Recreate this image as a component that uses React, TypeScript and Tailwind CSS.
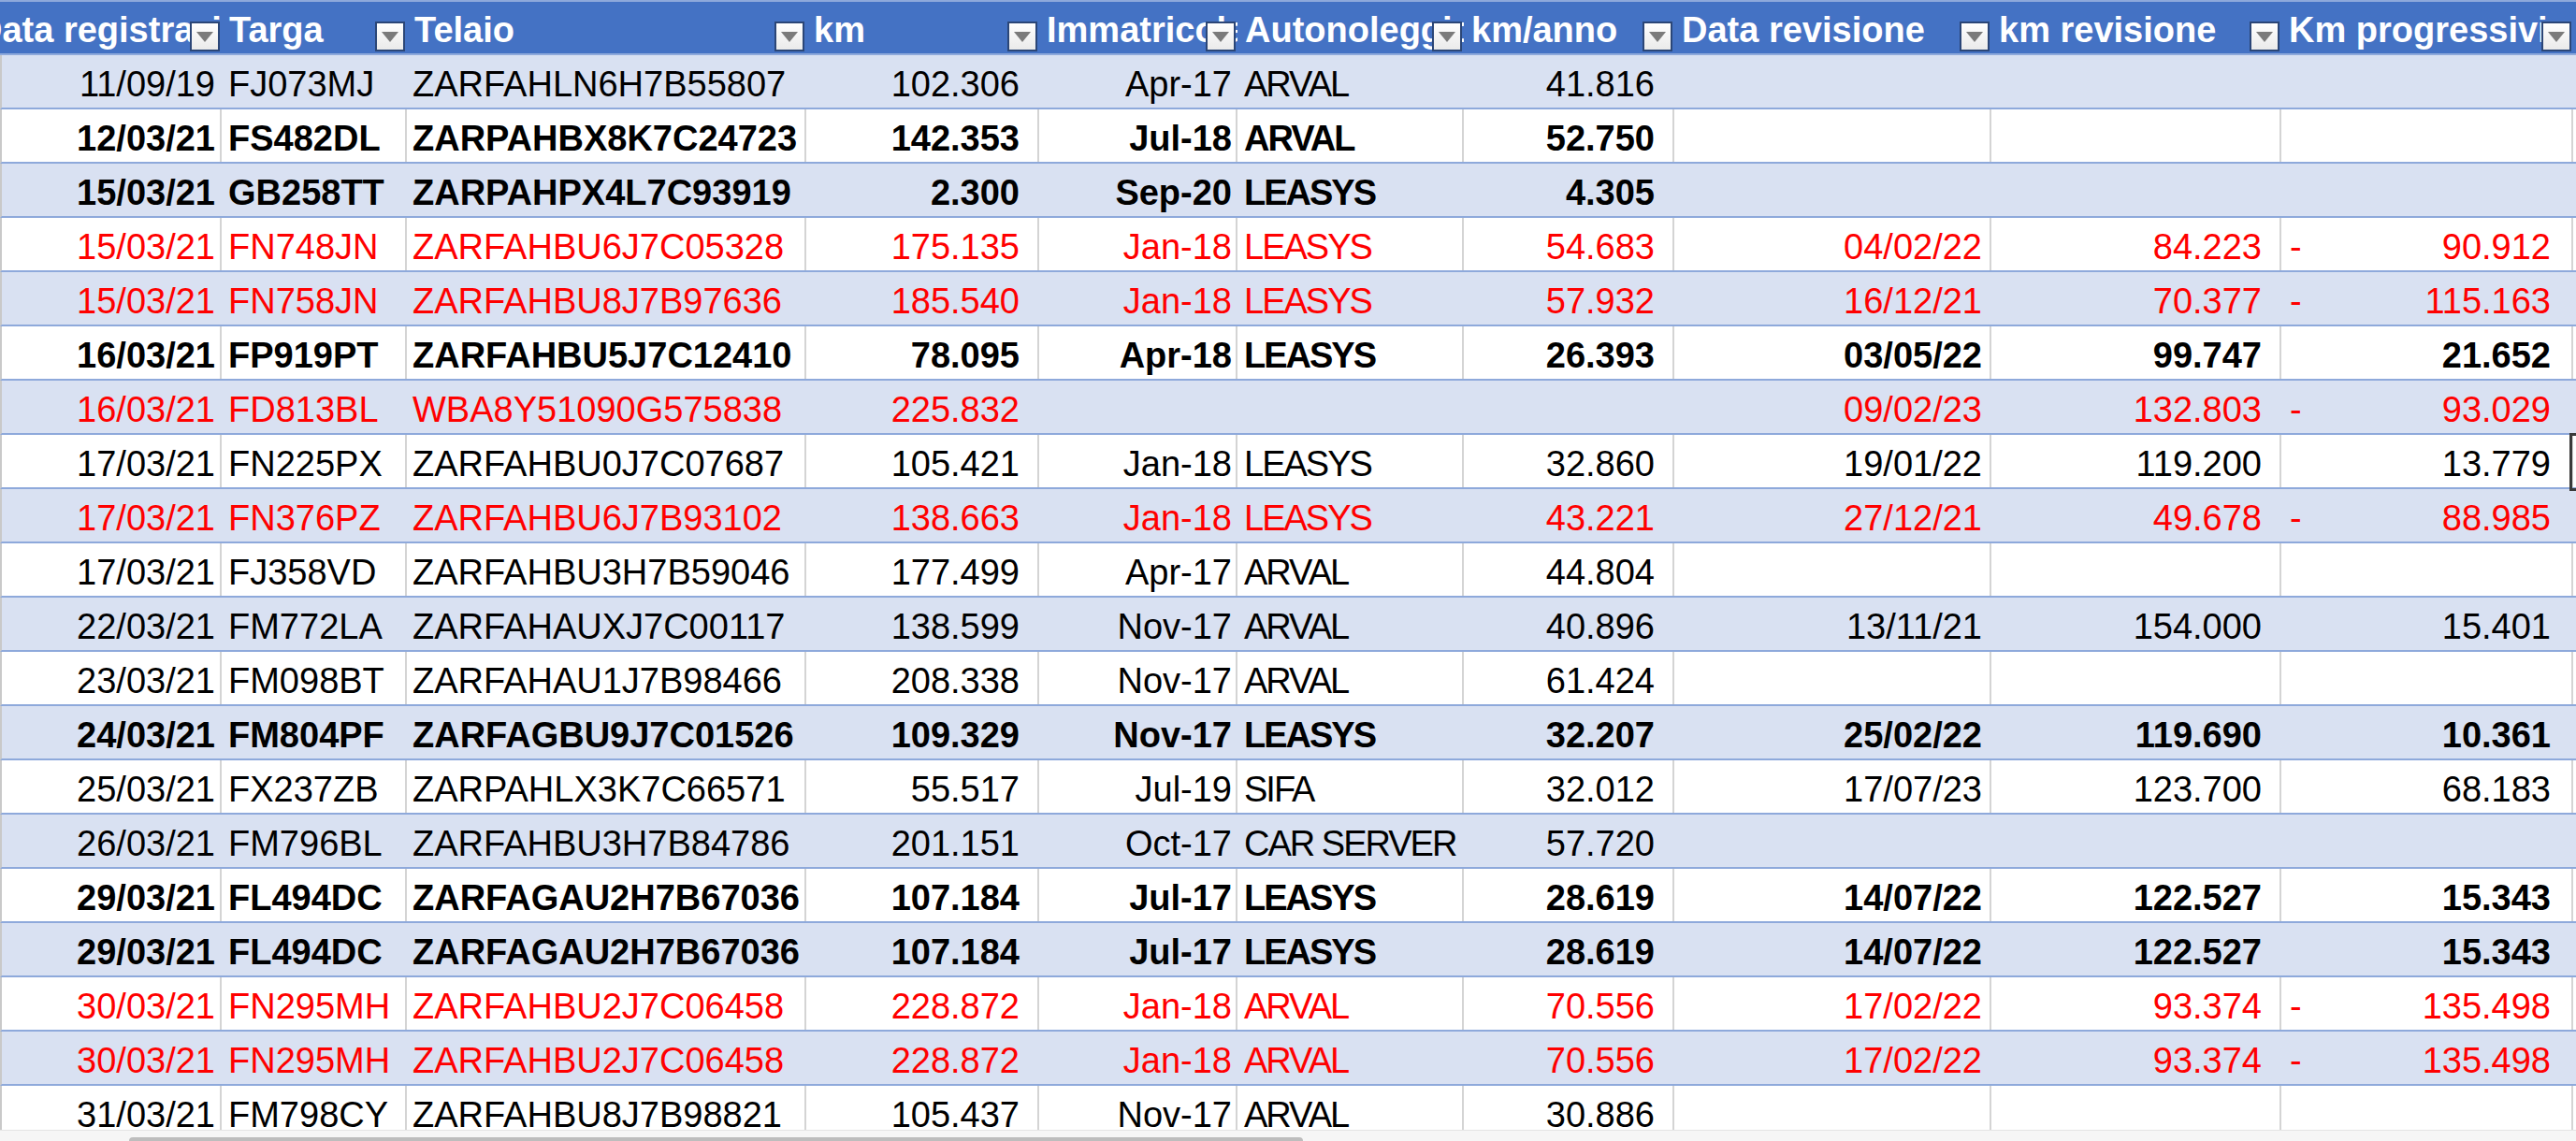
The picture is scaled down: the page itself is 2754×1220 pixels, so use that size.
import React from "react"

type Row = { c: string[]; s: "n" | "b" | "r"; neg?: boolean }

const headers = [
  "Data registrazione",
  "Targa",
  "Telaio",
  "km",
  "Immatricolazione",
  "Autonoleggio",
  "km/anno",
  "Data revisione",
  "km revisione",
  "Km progressivi",
]

const rows: Row[] = [
  { s: "n", c: ["11/09/19", "FJ073MJ", "ZARFAHLN6H7B55807", "102.306", "Apr-17", "ARVAL", "41.816", "", "", ""] },
  { s: "b", c: ["12/03/21", "FS482DL", "ZARPAHBX8K7C24723", "142.353", "Jul-18", "ARVAL", "52.750", "", "", ""] },
  { s: "b", c: ["15/03/21", "GB258TT", "ZARPAHPX4L7C93919", "2.300", "Sep-20", "LEASYS", "4.305", "", "", ""] },
  { s: "r", neg: true, c: ["15/03/21", "FN748JN", "ZARFAHBU6J7C05328", "175.135", "Jan-18", "LEASYS", "54.683", "04/02/22", "84.223", "90.912"] },
  { s: "r", neg: true, c: ["15/03/21", "FN758JN", "ZARFAHBU8J7B97636", "185.540", "Jan-18", "LEASYS", "57.932", "16/12/21", "70.377", "115.163"] },
  { s: "b", c: ["16/03/21", "FP919PT", "ZARFAHBU5J7C12410", "78.095", "Apr-18", "LEASYS", "26.393", "03/05/22", "99.747", "21.652"] },
  { s: "r", neg: true, c: ["16/03/21", "FD813BL", "WBA8Y51090G575838", "225.832", "", "", "", "09/02/23", "132.803", "93.029"] },
  { s: "n", c: ["17/03/21", "FN225PX", "ZARFAHBU0J7C07687", "105.421", "Jan-18", "LEASYS", "32.860", "19/01/22", "119.200", "13.779"] },
  { s: "r", neg: true, c: ["17/03/21", "FN376PZ", "ZARFAHBU6J7B93102", "138.663", "Jan-18", "LEASYS", "43.221", "27/12/21", "49.678", "88.985"] },
  { s: "n", c: ["17/03/21", "FJ358VD", "ZARFAHBU3H7B59046", "177.499", "Apr-17", "ARVAL", "44.804", "", "", ""] },
  { s: "n", c: ["22/03/21", "FM772LA", "ZARFAHAUXJ7C00117", "138.599", "Nov-17", "ARVAL", "40.896", "13/11/21", "154.000", "15.401"] },
  { s: "n", c: ["23/03/21", "FM098BT", "ZARFAHAU1J7B98466", "208.338", "Nov-17", "ARVAL", "61.424", "", "", ""] },
  { s: "b", c: ["24/03/21", "FM804PF", "ZARFAGBU9J7C01526", "109.329", "Nov-17", "LEASYS", "32.207", "25/02/22", "119.690", "10.361"] },
  { s: "n", c: ["25/03/21", "FX237ZB", "ZARPAHLX3K7C66571", "55.517", "Jul-19", "SIFA", "32.012", "17/07/23", "123.700", "68.183"] },
  { s: "n", c: ["26/03/21", "FM796BL", "ZARFAHBU3H7B84786", "201.151", "Oct-17", "CAR SERVER", "57.720", "", "", ""] },
  { s: "b", c: ["29/03/21", "FL494DC", "ZARFAGAU2H7B67036", "107.184", "Jul-17", "LEASYS", "28.619", "14/07/22", "122.527", "15.343"] },
  { s: "b", c: ["29/03/21", "FL494DC", "ZARFAGAU2H7B67036", "107.184", "Jul-17", "LEASYS", "28.619", "14/07/22", "122.527", "15.343"] },
  { s: "r", neg: true, c: ["30/03/21", "FN295MH", "ZARFAHBU2J7C06458", "228.872", "Jan-18", "ARVAL", "70.556", "17/02/22", "93.374", "135.498"] },
  { s: "r", neg: true, c: ["30/03/21", "FN295MH", "ZARFAHBU2J7C06458", "228.872", "Jan-18", "ARVAL", "70.556", "17/02/22", "93.374", "135.498"] },
  { s: "n", c: ["31/03/21", "FM798CY", "ZARFAHBU8J7B98821", "105.437", "Nov-17", "ARVAL", "30.886", "", "", ""] },
]

// horizontal alignment / padding per column (Excel-ish)
const align = [
  "justify-end pr-[5px]",
  "justify-start pl-[7px]",
  "justify-start pl-[6px]",
  "justify-end pr-[19px]",
  "justify-end pr-[4px]",
  "justify-start pl-[7px] tracking-[-2px]",
  "justify-end pr-[19px]",
  "justify-end pr-[8px]",
  "justify-end pr-[19px]",
  "justify-end pl-[9px] pr-[22px]",
]

const FilterButton = () => (
  <div className="absolute right-[2px] bottom-[2px] w-[32px] h-[32px] border-2 border-[#2B4677] bg-gradient-to-b from-white to-[#EAEAEA] flex justify-center pt-[9px]">
    <div className="w-0 h-0 border-l-[9px] border-r-[9px] border-t-[11px] border-l-transparent border-r-transparent border-t-[#7B7B7B]" />
  </div>
)

const Header = () => (
  <div className="grid grid-cols-[237px_198px_427px_249px_212px_242px_225px_339px_310px_312px_1fr] h-[59px] shrink-0 bg-[#4472C4] border-t-2 border-b-2 border-[#8EA9DB]">
    {headers.map((h, i) => (
      <div key={h} className="relative overflow-hidden flex items-end pb-[6px] pl-[8px]">
        <span className={`shrink-0 whitespace-nowrap text-white font-bold text-[38px] leading-none ${i === 0 ? "-ml-[33px]" : ""}`}>{h}</span>
        <FilterButton />
      </div>
    ))}
    <div />
  </div>
)

const DataRow = ({ row, band }: { row: Row; band: boolean }) => {
  const color = row.s === "r" ? "text-[#FF0000]" : "text-black"
  const weight = row.s === "b" ? "font-bold" : "font-normal"
  const line = band ? "border-transparent" : "border-[#D4D4D4]"
  return (
    <div
      className={`grid grid-cols-[235px_198px_427px_249px_212px_242px_225px_339px_310px_312px_1fr] h-[58px] shrink-0 border-l-2 border-l-[#C9C9C9] border-b-2 border-b-[#8EA9DB] ${band ? "bg-[#D9E1F2]" : "bg-white"}`}
    >
      {row.c.map((v, i) => (
        <div key={i} className={`flex items-end pb-[6px] border-r-2 ${line} ${align[i]} ${color} ${weight} text-[38px] leading-none whitespace-nowrap`}>
          {i === 9 && row.neg && v ? <span className="mr-auto">-</span> : null}
          <span>{v}</span>
        </div>
      ))}
      <div />
    </div>
  )
}

export default function App() {
  return (
    <div className="relative w-[2754px] h-[1220px] overflow-hidden bg-white flex flex-col font-['Liberation_Sans',Arial,sans-serif]">
      <Header />
      <div className="flex-1 overflow-hidden flex flex-col">
        {rows.map((r, i) => (
          <DataRow key={i} row={r} band={i % 2 === 0} />
        ))}
      </div>
      {/* horizontal scrollbar strip */}
      <div className="h-[12px] shrink-0 bg-[#F6F6F6] border-t border-[#E4E4E4] pl-[138px] pt-[7px]">
        <div className="w-[1255px] h-[5px] rounded-t-[4px] bg-[#BDBDBD]" />
      </div>
      {/* active cell marker peeking in at the right edge */}
      <div className="absolute left-[2747px] top-[463px] w-[30px] h-[62px] border-[3px] border-[#3A3A3A]" />
    </div>
  )
}
